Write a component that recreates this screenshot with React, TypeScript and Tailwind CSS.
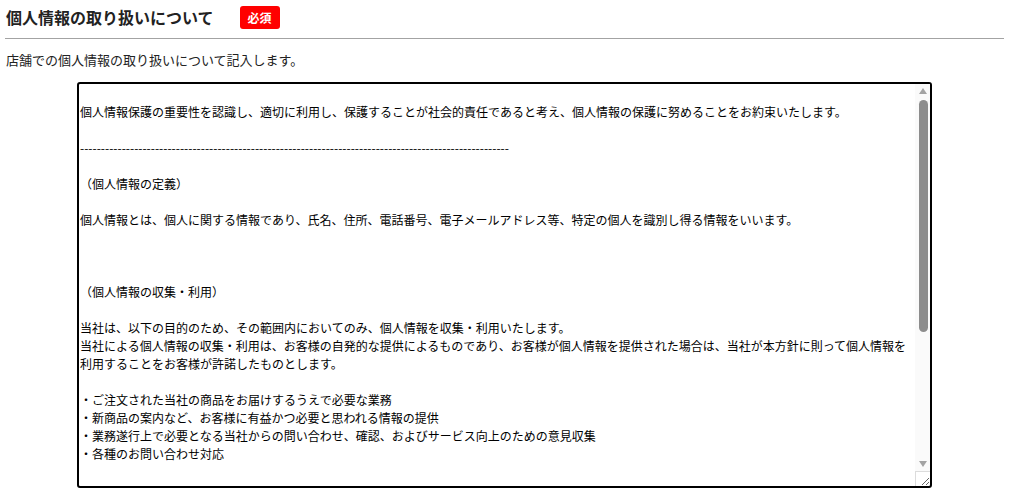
import React from 'react'

const DASHES = '-'.repeat(103)

const POLICY_LINES = [
  '',
  '個人情報保護の重要性を認識し、適切に利用し、保護することが社会的責任であると考え、個人情報の保護に努めることをお約束いたします。',
  '',
  DASHES,
  '',
  '（個人情報の定義）',
  '',
  '個人情報とは、個人に関する情報であり、氏名、住所、電話番号、電子メールアドレス等、特定の個人を識別し得る情報をいいます。',
  '',
  '',
  '',
  '（個人情報の収集・利用）',
  '',
  '当社は、以下の目的のため、その範囲内においてのみ、個人情報を収集・利用いたします。',
  '当社による個人情報の収集・利用は、お客様の自発的な提供によるものであり、お客様が個人情報を提供された場合は、当社が本方針に則って個人情報を利用することをお客様が許諾したものとします。',
  '',
  '・ご注文された当社の商品をお届けするうえで必要な業務',
  '・新商品の案内など、お客様に有益かつ必要と思われる情報の提供',
  '・業務遂行上で必要となる当社からの問い合わせ、確認、およびサービス向上のための意見収集',
  '・各種のお問い合わせ対応',
  '',
  '',
  '（個人情報の第三者提供）',
  '',
  '当社は、法令に基づく場合等正当な理由によらない限り、事前に本人の同意を得ることなく、個人情報を第三者に開示・提供することはありません。',
  '',
  '',
  '（個人情報の管理）',
  '',
  '当社は、個人情報の正確性及び安全性確保のために、セキュリティ対策を始めとする適切な措置を講じます。',
  '',
  '',
  '（お問い合わせ）',
  '',
  '当社の個人情報の取扱に関するお問い合わせは、店舗までご連絡ください。',
]

// テキストエリアのスクロールバー（ヘッドレスでは描かれないので上に重ねる）
function FakeScrollbar() {
  return (
    <div className="pointer-events-none absolute right-[2px] top-[2px] bottom-[2px] w-[15px] flex flex-col items-center">
      <div className="flex-1 self-stretch flex flex-col items-center bg-[#fafafa] pt-[4px] pb-[4px]">
        <div className="ml-[1px] h-0 w-0 border-x-[4.5px] border-x-transparent border-b-[6px] border-b-[#a3a3a3]" />
        <div className="ml-[1px] mt-[6px] h-[232px] w-[9px] rounded-full bg-[#8d8d8d]" />
        <div className="flex-1" />
        <div className="ml-[1px] h-0 w-0 border-x-[4.5px] border-x-transparent border-t-[6px] border-t-[#a3a3a3]" />
      </div>
      <div className="h-[15px] self-stretch border-l border-t border-[#dcdcdc]" />
    </div>
  )
}

export default function App() {
  return (
    <div className="px-[5px] bg-white text-black font-['Noto_Sans_CJK_JP',sans-serif]">
      {/* 見出し */}
      <div className="flex items-center pl-[1px] pt-[6px] pb-[9px] border-b border-[#a3a3a3]">
        <h2 className="text-[16px] leading-[23px] font-bold text-[#222]">個人情報の取り扱いについて</h2>
        <span className="ml-[26px] h-[23px] px-[8px] rounded-[3px] bg-[#ff0000] text-white text-[12px] font-bold leading-[23px]">
          必須
        </span>
      </div>

      <p className="mt-[11px] pl-[1px] text-[13px] leading-[20px] text-[#222]">
        店舗での個人情報の取り扱いについて記入します。
      </p>

      <div className="relative mx-auto mt-[12px] w-[855px]">
        <textarea
          readOnly
          defaultValue={POLICY_LINES.join('\n')}
          className="block w-[855px] h-[406px] border-2 border-black rounded-[3px] pl-[1px] pr-[16px] py-[1px] text-[12px] leading-[18px] text-black font-['Noto_Sans_CJK_JP',sans-serif] outline-none overflow-y-auto"
        />
        <FakeScrollbar />
      </div>
    </div>
  )
}
